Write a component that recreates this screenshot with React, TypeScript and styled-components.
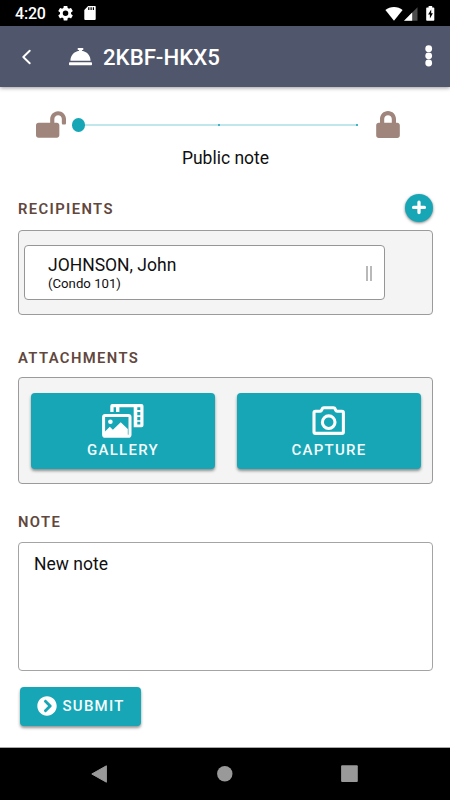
import React from 'react';
import styled, { createGlobalStyle } from 'styled-components';
import { FaLock, FaLockOpen, FaConciergeBell, FaChevronCircleRight } from 'react-icons/fa';

const GlobalStyle = createGlobalStyle`
  *, *::before, *::after { box-sizing: border-box; }
  html, body { margin: 0; padding: 0; background: #fff; }
  body { font-family: Roboto, "Liberation Sans", sans-serif; color: #101010; }
  button { font: inherit; border: 0; padding: 0; cursor: pointer; }
  svg { display: block; flex: none; }
`;

const Screen = styled.div`
  width: 450px;
  height: 800px;
  display: flex;
  flex-direction: column;
  background: #fff;
  overflow: hidden;
`;

const StatusBar = styled.div`
  flex: none;
  height: 26px;
  display: flex;
  align-items: center;
  padding: 1px 15px 0 15px;
  background: #000;
  color: #fff;
`;

const Clock = styled.span`
  width: 43px;
  font-size: 16px;
  line-height: 24px;
  font-weight: 500;
  letter-spacing: -0.2px;
`;

const StatusIcons = styled.div<{ $gap: number; $end?: boolean }>`
  display: flex;
  align-items: center;
  gap: ${(p) => p.$gap}px;
  margin-left: ${(p) => (p.$end ? 'auto' : '0')};
`;

const Header = styled.header`
  flex: none;
  height: 61px;
  display: flex;
  align-items: center;
  padding: 0 17px 0 22px;
  background: #50566b;
  box-shadow: 0 1px 4px rgba(0, 0, 0, 0.4);
`;

const HeaderButton = styled.button<{ $raise?: number }>`
  display: flex;
  padding-bottom: ${(p) => p.$raise ?? 0}px;
  background: none;
`;

const BellIcon = styled(FaConciergeBell)`
  width: 23px;
  height: 23px;
  margin: 0 11px 0 38px;
  color: #fff;
`;

const Title = styled.h1`
  flex: 1;
  margin: 0;
  color: #fff;
  font-size: 22.2px;
  line-height: 30px;
  font-weight: 500;
`;

const Content = styled.main`
  flex: 1;
  display: flex;
  flex-direction: column;
  padding: 24px 17px 0 18px;
`;

const PrivacyRow = styled.div`
  display: flex;
  align-items: flex-start;
  height: 28px;
  padding-left: 18px;
  color: #9f857c;
`;

const OpenLock = styled(FaLockOpen)`
  width: 30px;
  height: 27px;
`;

const ClosedLock = styled(FaLock)`
  width: 24px;
  height: 27px;
  margin-left: 17px;
`;

const Track = styled.div`
  display: flex;
  align-items: center;
  justify-content: space-between;
  width: 287px;
  height: 14px;
  margin: 7px 0 0 6px;
  background: linear-gradient(#bfe7ec, #bfe7ec) 7px 50% / 279px 2px no-repeat;
`;

const Thumb = styled.span`
  width: 13.4px;
  height: 13.4px;
  border-radius: 50%;
  background: #16a6b6;
`;

const Tick = styled.span<{ $end?: boolean }>`
  width: 2px;
  height: 2px;
  margin-right: ${(p) => (p.$end ? 1 : 0)}px;
  margin-left: ${(p) => (p.$end ? 0 : -4)}px;
  border-radius: 1px;
  background: #16a6b6;
`;

const PrivacyLabel = styled.div`
  height: 28px;
  margin-top: 5px;
  text-align: center;
  font-size: 17.5px;
  line-height: 29px;
`;

const SectionHead = styled.div<{ $top: number; $height: number }>`
  display: flex;
  flex: none;
  align-items: center;
  justify-content: space-between;
  height: ${(p) => p.$height}px;
  margin-top: ${(p) => p.$top}px;
`;

const SectionTitle = styled.h2<{ $drop?: number }>`
  margin: 0;
  padding-top: ${(p) => p.$drop ?? 0}px;
  color: #61473d;
  font-size: 14.8px;
  line-height: 20px;
  font-weight: 600;
  letter-spacing: 1.38px;
`;

const AddButton = styled.button`
  display: flex;
  align-items: center;
  justify-content: center;
  width: 28px;
  height: 28px;
  border-radius: 50%;
  background: #16a6b6;
  box-shadow: 0 1px 3px rgba(0, 0, 0, 0.5);
`;

const Panel = styled.section<{ $height: number }>`
  flex: none;
  height: ${(p) => p.$height}px;
  border: 1px solid #9b9b9b;
  border-radius: 4px;
  background: #f4f4f4;
`;

const RecipientPanel = styled(Panel)`
  margin-top: 8px;
`;

const Recipient = styled.div`
  display: flex;
  align-items: center;
  justify-content: space-between;
  width: 361px;
  height: 55px;
  margin: 14px 0 0 5px;
  padding: 0 12px 0 23px;
  border: 1px solid #969696;
  border-radius: 4px;
  background: #fff;
`;

const RecipientText = styled.div`
  display: flex;
  flex-direction: column;
  padding-top: 2px;
`;

const RecipientName = styled.span`
  font-size: 17.5px;
  line-height: 20px;
`;

const RecipientUnit = styled.span`
  font-size: 13.2px;
  line-height: 17px;
`;

const Grip = styled.span`
  width: 6px;
  height: 15px;
  margin-top: 2px;
  border: solid #b9b9b9;
  border-width: 0 2px;
`;

const AttachmentPanel = styled(Panel)`
  display: grid;
  grid-template-columns: 184px 184px;
  gap: 22px;
  padding: 15px 0 0 12px;
`;

const ActionButton = styled.button`
  display: flex;
  border-radius: 4px;
  background: #16a6b6;
  color: #f4fcfd;
  font-size: 15px;
  font-weight: 500;
  letter-spacing: 1.25px;
  box-shadow: 0 2px 3px rgba(0, 0, 0, 0.42);
`;

const TileButton = styled(ActionButton)`
  flex-direction: column;
  align-items: center;
  height: 76px;
  padding-top: 11px;
`;

const TileLabel = styled.span`
  line-height: 20px;
  margin-top: 1px;
`;

const NoteField = styled.textarea`
  display: block;
  flex: none;
  width: 415px;
  height: 129px;
  padding: 7px 15px;
  border: 1px solid #a4a4a4;
  border-radius: 4px;
  outline: 0;
  resize: none;
  background: #fff;
  color: #101010;
  font-family: inherit;
  font-size: 17.5px;
  line-height: 28px;
`;

const SubmitButton = styled(ActionButton)`
  flex: none;
  align-items: center;
  width: 121px;
  height: 39px;
  margin: 16px 0 0 2px;
  padding: 0 0 2px 16.5px;
`;

const SubmitIcon = styled(FaChevronCircleRight)`
  width: 20px;
  height: 20px;
  margin-right: 6px;
  color: #fff;
`;

const NavBar = styled.nav`
  flex: none;
  display: flex;
  justify-content: space-between;
  height: 53px;
  padding: 17px 92px 0 90px;
  border-top: 1px solid #a8a8a8;
  background: #000;
`;

const GearIcon = () => (
  <svg width="16" height="16" viewBox="2.2 2.6 20.8 20.8" fill="#fff">
    <path d="M19.14 12.94c.04-.3.06-.61.06-.94 0-.32-.02-.64-.07-.94l2.03-1.58a.49.49 0 0 0 .12-.61l-1.92-3.32a.49.49 0 0 0-.59-.22l-2.39.96a7 7 0 0 0-1.62-.94l-.36-2.54a.48.48 0 0 0-.48-.41h-3.84a.48.48 0 0 0-.47.41l-.36 2.54a7.4 7.4 0 0 0-1.62.94l-2.39-.96a.48.48 0 0 0-.59.22L2.74 8.87a.47.47 0 0 0 .12.61l2.03 1.58a6 6 0 0 0-.02 1.88l-2.03 1.58a.49.49 0 0 0-.12.61l1.92 3.32c.12.22.37.29.59.22l2.39-.96c.5.38 1.03.7 1.62.94l.36 2.54c.05.24.24.41.48.41h3.84c.24 0 .44-.17.47-.41l.36-2.54a7 7 0 0 0 1.62-.94l2.39.96c.22.08.47 0 .59-.22l1.92-3.32a.47.47 0 0 0-.12-.61zM12 15.6a3.6 3.6 0 1 1 0-7.2 3.6 3.6 0 0 1 0 7.2z" />
  </svg>
);

const SdCardIcon = () => (
  <svg width="12" height="15" viewBox="0 .6 12 15">
    <path d="M4.2.5H10.7A1 1 0 0 1 11.7 1.5V13.5A1 1 0 0 1 10.7 14.5H1.3A1 1 0 0 1 .3 13.5V4.5Z" fill="#fff" />
    <path d="M4.8 1.8V4.6M7.1 1.8V4.6M9.4 1.8V4.6" stroke="#000" strokeWidth="1.2" />
  </svg>
);

const WifiIcon = () => (
  <svg width="18" height="14" viewBox="0 0 18 14">
    <path d="M.4 3.1C5 -.9 13 -.9 17.6 3.1L9 13.8Z" fill="#fff" />
  </svg>
);

const SignalIcon = () => (
  <svg width="14" height="14" viewBox="0 0 14 14">
    <path d="M13.5 .3V13.8H0Z" fill="#4c4c4c" />
    <path d="M8.2 5.6V13.8H0Z" fill="#fff" />
  </svg>
);

const BatteryIcon = () => (
  <svg width="9" height="15" viewBox="0 0 9 15">
    <path d="M2.6 0H6.2V1.4H7.5A.8.8 0 0 1 8.3 2.2V14A.8.8 0 0 1 7.5 14.8H1A.8.8 0 0 1 .2 14V2.2A.8.8 0 0 1 1 1.4H2.6Z" fill="#fff" />
    <path d="M5.2 3.5L2.1 8.6H3.9V12.4L6.9 7.2H5.2Z" fill="#000" />
  </svg>
);

const BackIcon = () => (
  <svg width="9" height="16" viewBox="0 0 9 16" fill="none" stroke="#fff" strokeWidth="1.9" strokeLinecap="round" strokeLinejoin="round">
    <path d="M7.7 1.7L1.3 8L7.7 14.3" />
  </svg>
);

const MoreIcon = () => (
  <svg width="8" height="22" viewBox="0 0 8 22" fill="#fff">
    <circle cx="3.7" cy="3.7" r="3.4" />
    <circle cx="3.7" cy="10.8" r="3.4" />
    <circle cx="3.7" cy="18" r="3.4" />
  </svg>
);

const PlusIcon = () => (
  <svg width="16" height="16" viewBox="0 0 16 16" stroke="#fff" strokeWidth="3.3" strokeLinecap="round">
    <path d="M2.6 7.4H13.4M8 2.2V12.6" />
  </svg>
);

const GalleryIcon = () => (
  <svg width="42" height="35" viewBox="0 0 42 35">
    <path
      d="M10.3 0H39.5A2 2 0 0 1 41.5 2V21.2A2 2 0 0 1 39.5 23.2H31.7V3.2H17.4V8H14V3.2H11.6V8H8.3V2A2 2 0 0 1 10.3 0ZM35.3 3.3V6H38.3V3.3ZM35.3 8V11.2H38.3V8ZM35.3 13V16.2H38.3V13ZM35.3 17.8V20.6H38.3V17.8Z"
      fill="#fff"
      fillRule="evenodd"
    />
    <rect x="1.6" y="11.5" width="26.4" height="20.8" rx="1.6" fill="none" stroke="#fff" strokeWidth="3" />
    <circle cx="8.4" cy="17.8" r="2.3" fill="#fff" />
    <path d="M3 27.4L7.8 22.7L10.9 25.8L18.7 18.2L25.8 24.9V31H3Z" fill="#fff" />
  </svg>
);

const CameraIcon = () => (
  <svg width="34" height="35" viewBox="0 -0.8 34 35" fill="none" stroke="#fff" strokeWidth="3.1" strokeLinejoin="round">
    <path d="M3.5 6.4H8.2Q9.2 6.4 9.6 5.4L10.2 4Q10.6 2.9 11.8 2.9H21.5Q22.7 2.9 23.1 4L23.7 5.4Q24.1 6.4 25.1 6.4H29.9Q31.4 6.4 31.4 7.9V27.1Q31.4 28.6 29.9 28.6H3.5Q2 28.6 2 27.1V7.9Q2 6.4 3.5 6.4Z" />
    <circle cx="16.7" cy="17.4" r="6.3" />
  </svg>
);

const NavBackIcon = () => (
  <svg width="18" height="19" viewBox="0 0 18 19">
    <path d="M16.4 .8V17.2L1.8 9Z" fill="#999" stroke="#999" strokeLinejoin="round" />
  </svg>
);

const NavHomeIcon = () => (
  <svg width="16" height="18" viewBox="0 0 16 18">
    <circle cx="7.8" cy="8.7" r="7.7" fill="#999" />
  </svg>
);

const NavRecentsIcon = () => (
  <svg width="17" height="18" viewBox="0 0 17 18">
    <rect x=".1" y=".3" width="16.7" height="16.7" rx="1" fill="#999" />
  </svg>
);

export default function App() {
  return (
    <>
      <GlobalStyle />
      <Screen>
        <StatusBar>
          <Clock>4:20</Clock>
          <StatusIcons $gap={10}>
            <GearIcon />
            <SdCardIcon />
          </StatusIcons>
          <StatusIcons $gap={8} $end>
            <StatusIcons $gap={1}>
              <WifiIcon />
              <SignalIcon />
            </StatusIcons>
            <BatteryIcon />
          </StatusIcons>
        </StatusBar>
        <Header>
          <HeaderButton aria-label="Back"><BackIcon /></HeaderButton>
          <BellIcon />
          <Title>2KBF-HKX5</Title>
          <HeaderButton aria-label="More" $raise={2}><MoreIcon /></HeaderButton>
        </Header>
        <Content>
          <PrivacyRow>
            <OpenLock />
            <Track>
              <Thumb />
              <Tick />
              <Tick $end />
            </Track>
            <ClosedLock />
          </PrivacyRow>
          <PrivacyLabel>Public note</PrivacyLabel>
          <SectionHead $top={22} $height={28}>
            <SectionTitle $drop={2}>RECIPIENTS</SectionTitle>
            <AddButton aria-label="Add recipient"><PlusIcon /></AddButton>
          </SectionHead>
          <RecipientPanel $height={85}>
            <Recipient>
              <RecipientText>
                <RecipientName>JOHNSON, John</RecipientName>
                <RecipientUnit>(Condo 101)</RecipientUnit>
              </RecipientText>
              <Grip />
            </Recipient>
          </RecipientPanel>
          <SectionHead $top={24} $height={38}>
            <SectionTitle>ATTACHMENTS</SectionTitle>
          </SectionHead>
          <AttachmentPanel $height={107}>
            <TileButton>
              <GalleryIcon />
              <TileLabel>GALLERY</TileLabel>
            </TileButton>
            <TileButton>
              <CameraIcon />
              <TileLabel>CAPTURE</TileLabel>
            </TileButton>
          </AttachmentPanel>
          <SectionHead $top={18} $height={40}>
            <SectionTitle>NOTE</SectionTitle>
          </SectionHead>
          <NoteField defaultValue="New note" />
          <SubmitButton>
            <SubmitIcon />
            SUBMIT
          </SubmitButton>
        </Content>
        <NavBar>
          <NavBackIcon />
          <NavHomeIcon />
          <NavRecentsIcon />
        </NavBar>
      </Screen>
    </>
  );
}
